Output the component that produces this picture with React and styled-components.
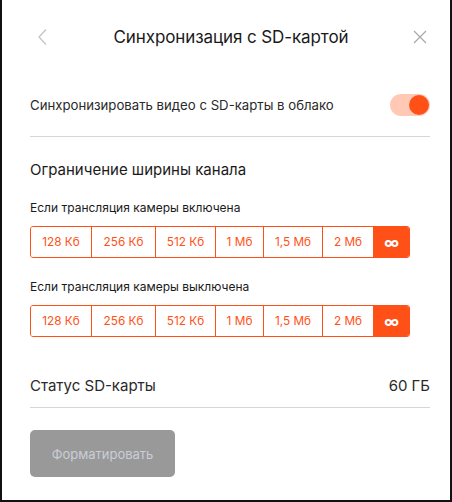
import React, { useState } from 'react';
import styled, { createGlobalStyle } from 'styled-components';

const GlobalStyle = createGlobalStyle`
  html, body {
    margin: 0;
    padding: 0;
    background: #fff;
  }
  body {
    font-family: Inter, Roboto, "Noto Sans", sans-serif;
    color: #1e1e1e;
  }
`;

const ORANGE = '#ff5117';

const Frame = styled.div`
  width: 452px;
  height: 502px;
  box-sizing: border-box;
  border: 2px solid #111;
  border-top: none;
  padding: 0 20px 0 28px;
  display: flex;
  flex-direction: column;
`;

const Header = styled.div`
  height: 74px;
  display: flex;
  align-items: center;
  justify-content: space-between;
  padding-left: 2px;
`;

const Title = styled.h1`
  margin: 0;
  font-size: 17px;
  font-weight: 400;
  color: #1a1a1a;
  letter-spacing: -0.1px;
`;

const IconButton = styled.button`
  border: none;
  background: none;
  padding: 0;
  width: 20px;
  height: 20px;
  display: flex;
  align-items: center;
  justify-content: center;
  cursor: pointer;
`;

const Row = styled.div`
  display: flex;
  align-items: ${p => p.$align || 'center'};
  justify-content: space-between;
  box-sizing: border-box;
  height: ${p => p.$h}px;
  padding-bottom: ${p => p.$pb || 0}px;
  border-bottom: 1px solid #d6d6d6;
`;

const RowText = styled.span`
  font-size: ${p => p.$size || 14}px;
  color: #2a2a2a;
`;

const Toggle = styled.div`
  width: 40px;
  height: 22px;
  border-radius: 11px;
  background: #ffc9b6;
  display: flex;
  align-items: center;
  justify-content: ${p => (p.$on ? 'flex-end' : 'flex-start')};
  padding: 0 1px;
  box-sizing: border-box;
  cursor: pointer;
`;

const Knob = styled.div`
  width: 20px;
  height: 20px;
  border-radius: 50%;
  background: ${ORANGE};
`;

const SectionTitle = styled.h2`
  margin: 23px 0 0;
  font-size: 15px;
  font-weight: 400;
  color: #1a1a1a;
`;

const Label = styled.div`
  font-size: 12px;
  color: #1a1a1a;
  margin-top: ${p => p.$top}px;
`;

const Segments = styled.div`
  display: flex;
  margin-top: 11px;
  align-self: flex-start;
  border: 1px solid ${ORANGE};
  border-radius: 3px;
  overflow: hidden;
`;

const Segment = styled.button`
  height: 30px;
  width: ${p => p.$w}px;
  box-sizing: border-box;
  border: none;
  border-left: ${p => (p.$first ? 'none' : `1px solid ${ORANGE}`)};
  background: ${p => (p.$active ? ORANGE : '#fff')};
  color: ${p => (p.$active ? '#fff' : ORANGE)};
  font-family: inherit;
  font-size: 11.8px;
  padding: 0;
  cursor: pointer;
  display: flex;
  align-items: center;
  justify-content: center;
`;

const Infinity = styled.span`
  font-size: 15px;
  font-weight: 700;
  line-height: 1;
`;

const Content = styled.div`
  display: flex;
  flex-direction: column;
`;

const FormatButton = styled.button`
  margin-top: 22px;
  align-self: flex-start;
  width: 145px;
  height: 47px;
  border: none;
  border-radius: 5px;
  background: #999999;
  color: #c9ced6;
  font-family: inherit;
  font-size: 13px;
`;

const options = [
  { label: '128 Кб', w: 60 },
  { label: '256 Кб', w: 64 },
  { label: '512 Кб', w: 60 },
  { label: '1 Мб', w: 48 },
  { label: '1,5 Мб', w: 59 },
  { label: '2 Мб', w: 51 },
  { label: 'inf', w: 36 },
];

function SpeedPicker({ value, onChange }) {
  return (
    <Segments>
      {options.map((o, i) => (
        <Segment
          key={o.label}
          $w={o.w}
          $first={i === 0}
          $active={value === o.label}
          onClick={() => onChange(o.label)}
        >
          {o.label === 'inf' ? <Infinity>∞</Infinity> : o.label}
        </Segment>
      ))}
    </Segments>
  );
}

export default function App() {
  const [sync, setSync] = useState(true);
  const [onSpeed, setOnSpeed] = useState('inf');
  const [offSpeed, setOffSpeed] = useState('inf');

  return (
    <>
      <GlobalStyle />
      <Frame>
        <Header>
          <IconButton aria-label="Назад">
            <svg width="12" height="18" viewBox="0 0 12 18">
              <path d="M10 1.5 L3 9 L10 16.5" fill="none" stroke="#c4c4c4" strokeWidth="1.3" />
            </svg>
          </IconButton>
          <Title>Синхронизация с SD-картой</Title>
          <IconButton aria-label="Закрыть">
            <svg width="14" height="14" viewBox="0 0 14 14">
              <path d="M1 1 L13 13 M13 1 L1 13" fill="none" stroke="#a8a8a8" strokeWidth="1.2" />
            </svg>
          </IconButton>
        </Header>
        <Content>
          <Row $h={63}>
            <RowText $size={13.2}>Синхронизировать видео с SD-карты в облако</RowText>
            <Toggle $on={sync} onClick={() => setSync(!sync)}>
              <Knob />
            </Toggle>
          </Row>
          <SectionTitle>Ограничение ширины канала</SectionTitle>
          <Label $top={21}>Если трансляция камеры включена</Label>
          <SpeedPicker value={onSpeed} onChange={setOnSpeed} />
          <Label $top={21}>Если трансляция камеры выключена</Label>
          <SpeedPicker value={offSpeed} onChange={setOffSpeed} />
          <Row $h={71} $align="flex-end" $pb={12}>
            <RowText $size={15}>Статус SD-карты</RowText>
            <RowText $size={15}>60 ГБ</RowText>
          </Row>
          <FormatButton disabled>Форматировать</FormatButton>
        </Content>
      </Frame>
    </>
  );
}
